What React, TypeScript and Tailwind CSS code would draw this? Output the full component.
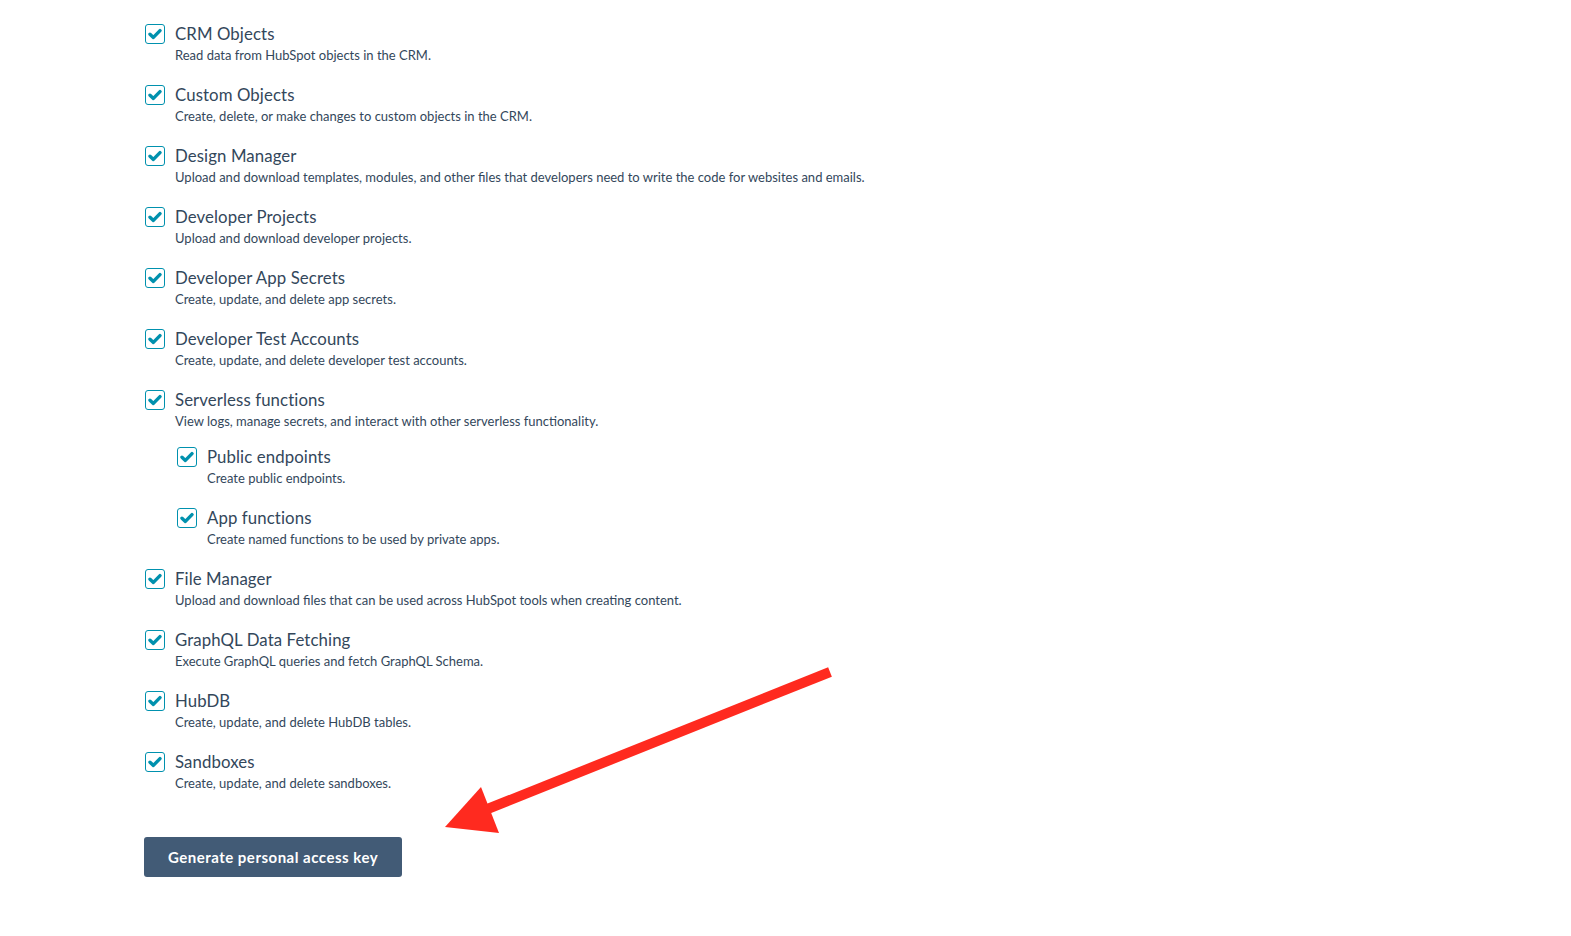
import React from 'react';

interface Scope {
  title: string;
  desc: string;
  nested?: boolean;
}

const scopes: Scope[] = [
  { title: 'CRM Objects', desc: 'Read data from HubSpot objects in the CRM.' },
  { title: 'Custom Objects', desc: 'Create, delete, or make changes to custom objects in the CRM.' },
  {
    title: 'Design Manager',
    desc: 'Upload and download templates, modules, and other files that developers need to write the code for websites and emails.',
  },
  { title: 'Developer Projects', desc: 'Upload and download developer projects.' },
  { title: 'Developer App Secrets', desc: 'Create, update, and delete app secrets.' },
  { title: 'Developer Test Accounts', desc: 'Create, update, and delete developer test accounts.' },
  { title: 'Serverless functions', desc: 'View logs, manage secrets, and interact with other serverless functionality.' },
  { title: 'Public endpoints', desc: 'Create public endpoints.', nested: true },
  { title: 'App functions', desc: 'Create named functions to be used by private apps.', nested: true },
  { title: 'File Manager', desc: 'Upload and download files that can be used across HubSpot tools when creating content.' },
  { title: 'GraphQL Data Fetching', desc: 'Execute GraphQL queries and fetch GraphQL Schema.' },
  { title: 'HubDB', desc: 'Create, update, and delete HubDB tables.' },
  { title: 'Sandboxes', desc: 'Create, update, and delete sandboxes.' },
];

const Checkbox = () => (
  <span className="flex h-[20px] w-[20px] shrink-0 items-center justify-center rounded-[3px] border-[1.5px] border-[#0091ae] bg-white">
    <svg width="14" height="12" viewBox="0 0 14 12">
      <path d="M2 6.2 L5.4 9.4 L12 2.6" fill="none" stroke="#0091ae" strokeWidth="3.4" strokeLinecap="round" strokeLinejoin="round" />
    </svg>
  </span>
);

const ScopeRow = ({ scope }: { scope: Scope }) => (
  <div className={scope.nested ? 'pl-[32px]' : ''}>
    <div className="flex h-[22px] items-center gap-[10px]">
      <Checkbox />
      <span className="text-[16.8px] tracking-[0.1px] text-[#33475b]">{scope.title}</span>
    </div>
    <p className="mt-[2px] pl-[30px] text-[13px] leading-[16px] text-[#33475b]">{scope.desc}</p>
  </div>
);

export default function App() {
  return (
    <div className="relative min-h-[936px] bg-white font-['Lato',sans-serif]">
      <div className="flex flex-col pl-[145px] pt-[23px]">
        {scopes.map((s, i) => (
          <div
            key={s.title}
            className={
              i === 0
                ? ''
                : scopes[i - 1].title === 'Serverless functions'
                ? 'mt-[17px]'
                : 'mt-[21px]'
            }
          >
            <ScopeRow scope={s} />
          </div>
        ))}
        <div className="mt-[46px]">
          <button className="h-[40px] w-[258px] -ml-[1px] rounded-[3px] bg-[#425b76] text-[15px] font-bold tracking-[0.5px] text-white">
            Generate personal access key
          </button>
        </div>
      </div>
      <svg className="absolute left-0 top-0" width="1571" height="936" viewBox="0 0 1571 936">
        <line x1="830" y1="672" x2="480" y2="812" stroke="#ff2a1f" strokeWidth="10" />
        <polygon points="445,827 481,787 499,833" fill="#ff2a1f" />
      </svg>
    </div>
  );
}
